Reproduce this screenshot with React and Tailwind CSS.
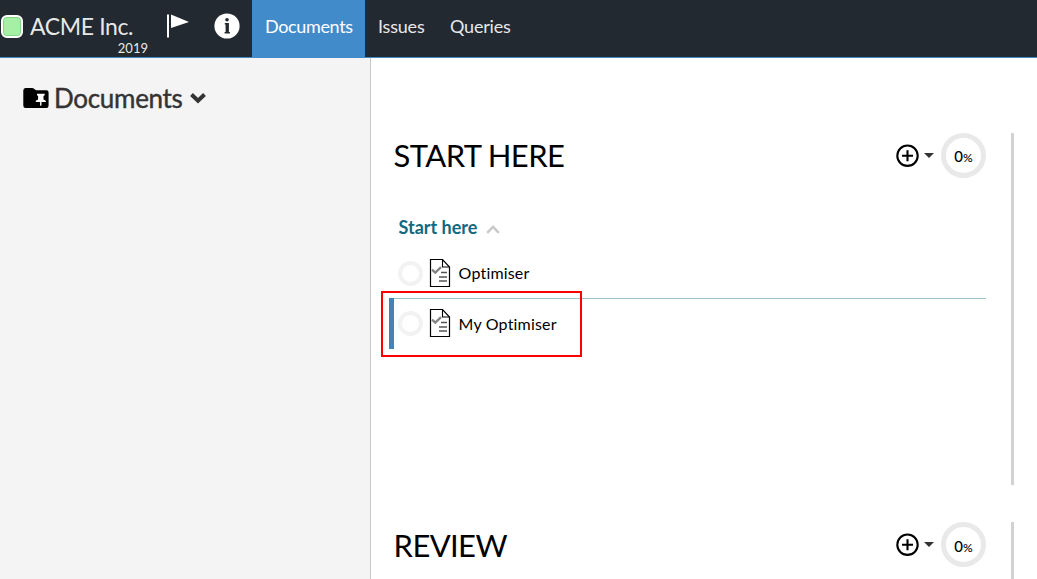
import React from "react";

function FlagIcon() {
  return (
    <svg className="block h-6 w-[23px]" viewBox="0 0 23 24" fill="#fff">
      <path d="M1 .5h2v23H1zM5 .5 23 8 5 14Z" />
    </svg>
  );
}

function InfoIcon() {
  return (
    <svg className="block h-[26px] w-[26px]" viewBox="0 0 26 26">
      <circle cx="13" cy="13" r="12.6" fill="#fff" />
      <g fill="#222930">
        <circle cx="13" cy="6.7" r="1.8" />
        <path d="M10.8 10h4.1v9h1v1.4h-5.3V19h1v-7.5h-.8z" />
      </g>
    </svg>
  );
}

function FolderIcon() {
  return (
    <svg className="block h-5 w-[26px]" viewBox="0 0 26 20">
      <path d="M2.5 0H9.2Q10.3 0 11 .8L13 2.3H23.5Q25.6 2.3 25.6 4.5V17.5Q25.6 20 23.5 20H2.5Q.3 20 .3 17.5V2.5Q.3 0 2.5 0Z" fill="#000" />
      <path d="M14 5.8h7.7v1.4l-1.2.8v3.5l2.3 1.2v1.4h-4.3V17l-.7 1.3-.7-1.3v-2.9h-4.3v-1.4l2.3-1.2V8l-1.1-.8z" fill="#fff" />
    </svg>
  );
}

function ProgressRing() {
  return <div className="h-[25px] w-[25px] shrink-0 rounded-full border-4 border-[#f2f2f2]" />;
}

function FileIcon() {
  return (
    <svg className="block h-7 w-5 shrink-0 overflow-visible" viewBox="0 0 20 28" fill="none">
      <path d="M.5.5H12.5L19.5 8V27.5H.5Z" stroke="#000" strokeWidth="1.2" />
      <path d="M12.5.5V8H19.5" stroke="#000" strokeWidth="1.1" />
      <path d="M2 10.7 5.3 13.7 11 8.2" stroke="#858585" strokeWidth="2.4" />
      <path d="M11 13.5h6M9 18h8M9 22h8" stroke="#555" strokeWidth="1.3" />
    </svg>
  );
}

function Controls({ textClass }) {
  return (
    <div className="flex items-center">
      <svg className="mr-px h-6 w-6" viewBox="0 0 24 24" fill="none" stroke="#000">
        <circle cx="12.5" cy="11.7" r="10.2" strokeWidth="2.1" />
        <path d="M7 11.7h11M12.5 6.2v11" strokeWidth="2.1" />
      </svg>
      <svg className="ml-1 h-[5px] w-[10px]" viewBox="0 0 10 5">
        <path d="M0 0h10L5 5z" fill="#333" />
      </svg>
      <div className={`ml-[7px] flex h-[45px] w-[45px] items-center justify-center rounded-full border-[5px] border-[#e9e9e9] text-[15px] leading-none text-black ${textClass}`}>
        <span className="font-medium">0<span className="text-[12px]">%</span></span>
      </div>
    </div>
  );
}

function DocumentRow({ label, labelClass }) {
  return (
    <div className="flex h-7 items-center">
      <ProgressRing />
      <div className="ml-[7px]"><FileIcon /></div>
      <span className={`ml-[8.6px] text-[16px] leading-7 tracking-[0.18px] text-black ${labelClass}`}>{label}</span>
    </div>
  );
}

function Section({ title, titleClass = "", textClass = "pt-[2px]", children }) {
  return (
    <section className="mr-[23px] h-[352px] shrink-0 border-r-[3px] border-[#d2d2d2]">
      <div className="mr-[25px] ml-[22.6px] flex h-[45px] items-center justify-between">
        <h2 className={`text-[31px] leading-none tracking-[-0.62px] text-black ${titleClass}`}>{title}</h2>
        <Controls textClass={textClass} />
      </div>
      {children}
    </section>
  );
}

export default function App() {
  return (
    <div className="flex h-[579px] w-[1037px] flex-col overflow-hidden bg-white font-['Lato',sans-serif]">
      <header className="flex h-[58px] shrink-0 border-b border-[#428bca] bg-[#222930] text-[#e8e8e8]">
        <div className="flex w-[252px] shrink-0">
          <div className="ml-px mt-[15px] h-[23px] w-[22px] rounded-[6px] border-2 border-white bg-[#a5f0a5] shadow-[inset_0_0_0_1px_#86d586]" />
          <div className="ml-[7px] mt-[13px] w-[118px]">
            <div className="whitespace-nowrap text-[23px] leading-[27px] tracking-[-0.38px]">ACME Inc.</div>
            <div className="text-right text-[13px] leading-[16px]">2019</div>
          </div>
          <div className="ml-[18px] mt-[14px]"><FlagIcon /></div>
          <div className="ml-[25px] mt-[13px]"><InfoIcon /></div>
        </div>
        <nav className="flex whitespace-nowrap text-[18px] leading-[53px] tracking-[-0.2px]">
          <a className="w-[113px] bg-[#428bca] pl-[13px] tracking-[-0.35px] text-white">Documents</a>
          <a className="w-[72px] pl-[13px]">Issues</a>
          <a className="pl-[13px]">Queries</a>
        </nav>
      </header>
      <div className="flex min-h-0 flex-1">
        <aside className="w-[371px] shrink-0 border-r border-[#c8c8c8] bg-[#f4f4f4] pl-[23px] pt-6">
          <div className="flex h-8 items-center">
            <FolderIcon />
            <h1 className="ml-[5px] w-[129px] whitespace-nowrap text-[26px] leading-8 tracking-[-0.3px] text-[#333] [-webkit-text-stroke:0.4px_#333]">Documents</h1>
            <svg className="ml-[7px] h-[11px] w-4" viewBox="0 0 16 11" fill="none">
              <path d="M1.5 1.5 8 7.7 14.5 1.5" stroke="#333" strokeWidth="4" />
            </svg>
          </div>
        </aside>
        <main className="flex min-w-0 flex-1 flex-col gap-[37px] pt-[75px]">
          <Section title="START HERE">
            <div className="ml-[27.5px] mt-[39px] flex h-5 items-center">
              <h3 className="text-[18px] font-bold leading-5 text-[#11697f]">Start here</h3>
              <svg className="ml-[9px] mt-1 h-[9px] w-[14px]" viewBox="0 0 14 9" fill="none">
                <path d="M1.2 7.8 7 1.8l5.8 6" stroke="#c9c9c9" strokeWidth="2.4" />
              </svg>
            </div>
            <div className="relative ml-[18px] mr-[25px] mt-[22px]">
              <div className="ml-[9px]"><DocumentRow label="Optimiser" labelClass="" /></div>
              <div className="mt-[11px] h-[51px] border-t border-[#9dc4c8]">
                <div className="-mt-px h-[51px] border-l-[5px] border-[#4682b4] pl-1 pt-[11px]">
                  <DocumentRow label="My Optimiser" labelClass="pt-[2px]" />
                </div>
              </div>
              <div className="absolute -left-2 top-[32px] h-[66px] w-[201px] border-2 border-[#ff0000]" />
            </div>
          </Section>
          <Section title="REVIEW" titleClass="pt-[2px]" textClass="pt-[4px]" />
        </main>
      </div>
    </div>
  );
}
